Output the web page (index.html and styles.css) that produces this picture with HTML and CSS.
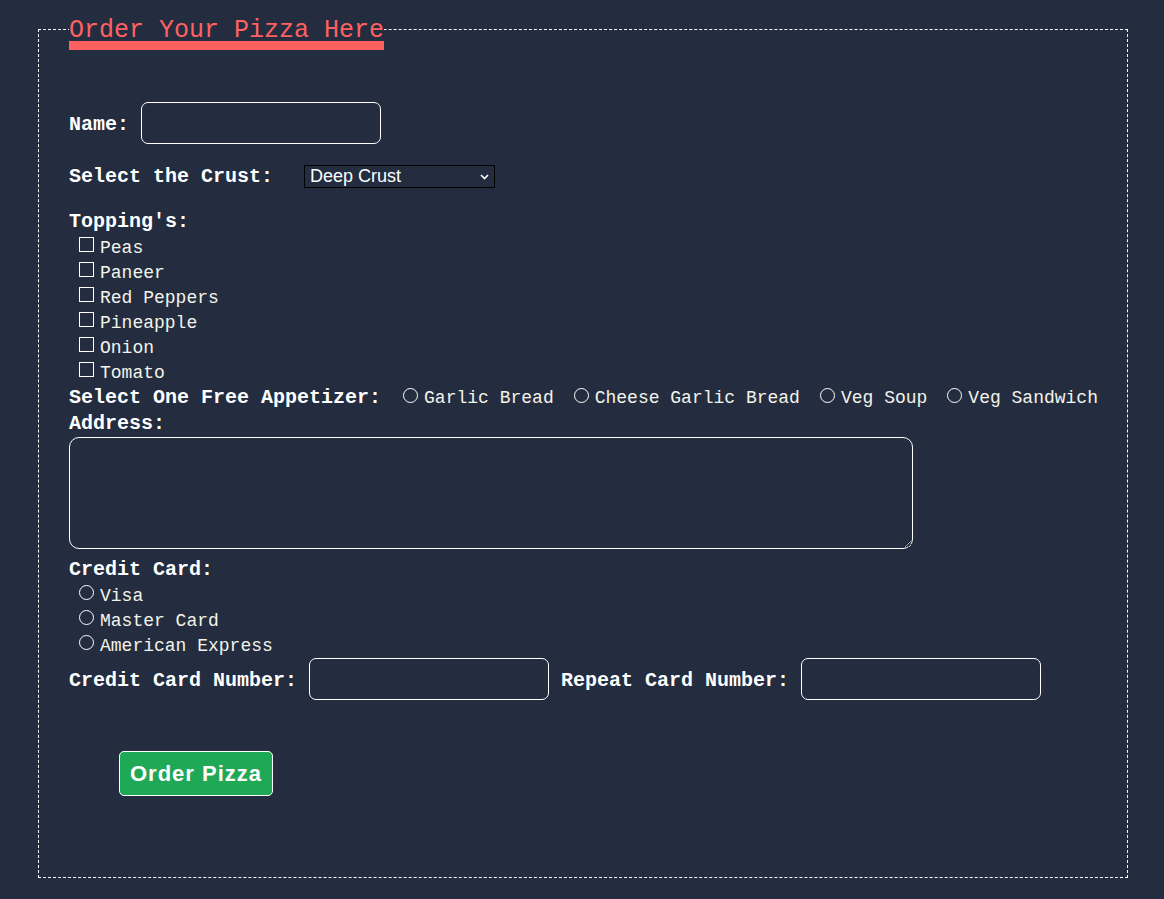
FILE: index.html
```html
<!DOCTYPE html>
<html lang="en">
<head>
<meta charset="utf-8">
<title>Order Your Pizza Here</title>
<link rel="stylesheet" href="styles.css">
</head>
<body>
<form class="order">
  <fieldset class="box">
    <legend class="title">Order Your Pizza Here</legend>

    <div class="row row-name">
      <label class="lbl" for="name">Name:</label>
      <input class="field" id="name" type="text">
    </div>

    <div class="row row-crust">
      <label class="lbl crust-lbl" for="crust">Select the Crust:</label>
      <div class="select-wrap">
        <select class="crust" id="crust">
          <option>Deep Crust</option>
          <option>Thin Crust</option>
          <option>Cheese Burst</option>
        </select>
        <svg class="chev" width="9" height="6" viewBox="0 0 9 6"><path d="M1 1 L4.5 4.5 L8 1" fill="none" stroke="#fff" stroke-width="1.6"/></svg>
      </div>
    </div>

    <div class="lbl head head-top">Topping's:</div>
    <div class="list">
      <label class="opt"><input type="checkbox" class="mark"><span>Peas</span></label>
      <label class="opt"><input type="checkbox" class="mark"><span>Paneer</span></label>
      <label class="opt"><input type="checkbox" class="mark"><span>Red Peppers</span></label>
      <label class="opt"><input type="checkbox" class="mark"><span>Pineapple</span></label>
      <label class="opt"><input type="checkbox" class="mark"><span>Onion</span></label>
      <label class="opt"><input type="checkbox" class="mark"><span>Tomato</span></label>
    </div>

    <div class="row row-app">
      <span class="lbl">Select One Free Appetizer:</span>
      <label class="opt inl first"><input type="radio" name="app" class="mark round"><span>Garlic Bread</span></label>
      <label class="opt inl"><input type="radio" name="app" class="mark round"><span>Cheese Garlic Bread</span></label>
      <label class="opt inl"><input type="radio" name="app" class="mark round"><span>Veg Soup</span></label>
      <label class="opt inl"><input type="radio" name="app" class="mark round"><span>Veg Sandwich</span></label>
    </div>

    <label class="lbl head" for="addr">Address:</label>
    <textarea class="addr" id="addr"></textarea>

    <div class="lbl head head-card">Credit Card:</div>
    <div class="list">
      <label class="opt"><input type="radio" name="card" class="mark round"><span>Visa</span></label>
      <label class="opt"><input type="radio" name="card" class="mark round"><span>Master Card</span></label>
      <label class="opt"><input type="radio" name="card" class="mark round"><span>American Express</span></label>
    </div>

    <div class="row row-num">
      <label class="lbl" for="num1">Credit Card Number:</label>
      <input class="field" id="num1" type="text">
      <label class="lbl gap-left" for="num2">Repeat Card Number:</label>
      <input class="field" id="num2" type="text">
    </div>

    <div class="actions">
      <button class="submit" type="button">Order Pizza</button>
    </div>
  </fieldset>
</form>
</body>
</html>
```

FILE: styles.css
```css
html, body {
  background: #232d3f;
}
body {
  margin: 8px;
  color: #ffffff;
  font-family: "Liberation Mono", "Courier New", monospace;
}
.order {
  margin: 0;
}
.box {
  margin: 0 28px 0 30px;
  padding: 0 30px 81px 30px;
  border: 1px dashed #ffffff;
  min-width: 0;
}
.title {
  padding: 12px 0 0 0;
  font-size: 25px;
  line-height: 21px;
  color: #ff6161;
  border-bottom: 9px solid #ff6161;
}
.row {
  display: flex;
  align-items: center;
}
.lbl {
  font-weight: bold;
  font-size: 20px;
  line-height: 26px;
  color: #ffffff;
  white-space: pre;
}
.row-name .lbl,
.row-num .lbl {
  padding-top: 3px;
}
.field {
  box-sizing: border-box;
  width: 240px;
  height: 42px;
  margin: 0 0 0 12px;
  background: transparent;
  border: 1px solid #ffffff;
  border-radius: 7px;
  color: #fff;
  font-size: 16px;
  padding: 0 8px;
}
.row-name {
  margin-top: 52px;
}
.row-crust {
  margin-top: 21px;
}
.crust-lbl {
  line-height: 23px;
}
.select-wrap {
  position: relative;
  margin-left: 31px;
  display: flex;
}
.crust {
  -webkit-appearance: none;
  appearance: none;
  box-sizing: border-box;
  width: 191px;
  height: 23px;
  background: #232d3f;
  color: #ffffff;
  border: 1px solid #000000;
  border-radius: 0;
  padding: 0 0 0 5px;
  font-family: "Liberation Sans", Arial, sans-serif;
  font-size: 18px;
  line-height: 21px;
}
.chev {
  position: absolute;
  right: 6px;
  top: 9px;
  pointer-events: none;
}
.head {
  display: block;
}
.head-top {
  margin-top: 21px;
}
.list {
  display: flex;
  flex-direction: column;
}
.opt {
  display: flex;
  align-items: center;
  height: 25px;
  font-size: 18px;
  color: #f5f3ea;
  white-space: pre;
}
.mark {
  -webkit-appearance: none;
  appearance: none;
  box-sizing: border-box;
  width: 15px;
  height: 15px;
  margin: -6px 6px 0 10px;
  border: 1px solid #ffffff;
  background: transparent;
  flex: none;
}
.round {
  border-radius: 50%;
}
.row-app {
  height: 26px;
}
.opt.inl {
  height: 26px;
}
.opt.inl .mark {
  margin-left: 20px;
  margin-right: 6px;
}
.opt.inl.first .mark {
  margin-left: 22px;
}
.addr {
  display: block;
  box-sizing: border-box;
  width: 844px;
  height: 112px;
  margin: 0;
  background: transparent;
  border: 1px solid #ffffff;
  border-radius: 10px;
  color: #fff;
  resize: both;
}
.head-card {
  margin-top: 8px;
}
.row-num {
  margin-top: 0;
}
.gap-left {
  margin-left: 12px;
}
.actions {
  margin-top: 51px;
  padding-left: 50px;
  display: flex;
}
.submit {
  box-sizing: border-box;
  width: 154px;
  height: 45px;
  background: #1fa855;
  color: #ffffff;
  border: 1px solid #ffffff;
  border-radius: 5px;
  font-family: "Liberation Sans", Arial, sans-serif;
  font-weight: bold;
  font-size: 22px;
  letter-spacing: 1px;
  padding: 0;
}
```
